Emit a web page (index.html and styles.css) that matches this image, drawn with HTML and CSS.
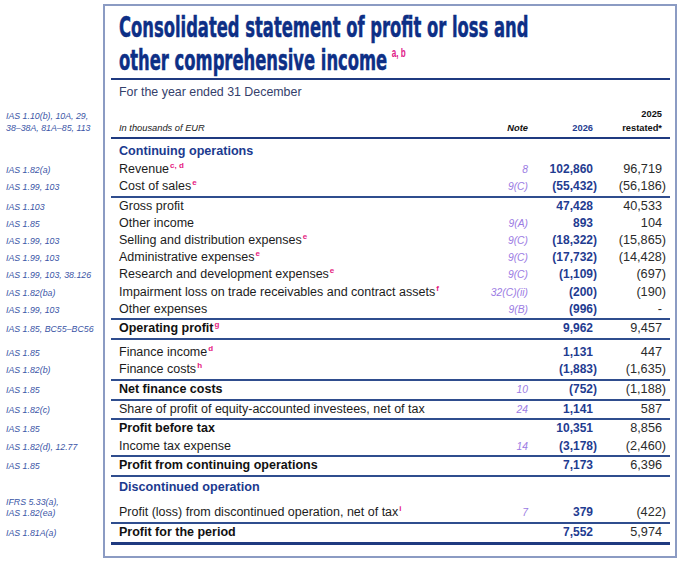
FILE: index.html
```html
<!DOCTYPE html>
<html lang="en">
<head>
<meta charset="utf-8">
<title>Consolidated statement of profit or loss and other comprehensive income</title>
<link rel="stylesheet" href="styles.css">
</head>
<body>
<main class="page">
  <header class="row top">
    <div class="ref"></div>
    <div class="body">
      <div class="inner">
        <div class="title-block">
          <h1 class="title"><span class="tl">Consolidated statement of profit or loss and</span><span class="tl">other comprehensive income<sup class="tfn">a, b</sup></span></h1>
        </div>
        <p class="period">For the year ended 31 December</p>
      </div>
    </div>
  </header>

  <div class="row head">
    <div class="ref">IAS 1.10(b), 10A, 29,<br>38–38A, 81A–85, 113</div>
    <div class="body"><div class="cells hd">
      <span class="lbl">In thousands of EUR</span>
      <span class="note">Note</span>
      <span class="cur p">2026</span>
      <span class="pri p">2025<br>restated*</span>
    </div></div>
  </div>

  <div class="row">
    <div class="ref"></div>
    <div class="body"><div class="cells sec first">
      <span class="lbl">Continuing operations</span>
      <span class="note"></span><span class="cur"></span><span class="pri"></span>
    </div></div>
  </div>

  <div class="row">
    <div class="ref">IAS 1.82(a)</div>
    <div class="body"><div class="cells">
      <span class="lbl">Revenue<sup class="fn">c, d</sup></span>
      <span class="note">8</span>
      <span class="cur p">102,860</span>
      <span class="pri p">96,719</span>
    </div></div>
  </div>

  <div class="row">
    <div class="ref">IAS 1.99, 103</div>
    <div class="body"><div class="cells rule">
      <span class="lbl">Cost of sales<sup class="fn">e</sup></span>
      <span class="note">9(C)</span>
      <span class="cur">(55,432)</span>
      <span class="pri">(56,186)</span>
    </div></div>
  </div>

  <div class="row">
    <div class="ref">IAS 1.103</div>
    <div class="body"><div class="cells">
      <span class="lbl">Gross profit</span>
      <span class="note"></span>
      <span class="cur p">47,428</span>
      <span class="pri p">40,533</span>
    </div></div>
  </div>

  <div class="row">
    <div class="ref">IAS 1.85</div>
    <div class="body"><div class="cells">
      <span class="lbl">Other income</span>
      <span class="note">9(A)</span>
      <span class="cur p">893</span>
      <span class="pri p">104</span>
    </div></div>
  </div>

  <div class="row">
    <div class="ref">IAS 1.99, 103</div>
    <div class="body"><div class="cells">
      <span class="lbl">Selling and distribution expenses<sup class="fn">e</sup></span>
      <span class="note">9(C)</span>
      <span class="cur">(18,322)</span>
      <span class="pri">(15,865)</span>
    </div></div>
  </div>

  <div class="row">
    <div class="ref">IAS 1.99, 103</div>
    <div class="body"><div class="cells">
      <span class="lbl">Administrative expenses<sup class="fn">e</sup></span>
      <span class="note">9(C)</span>
      <span class="cur">(17,732)</span>
      <span class="pri">(14,428)</span>
    </div></div>
  </div>

  <div class="row">
    <div class="ref">IAS 1.99, 103, 38.126</div>
    <div class="body"><div class="cells">
      <span class="lbl">Research and development expenses<sup class="fn">e</sup></span>
      <span class="note">9(C)</span>
      <span class="cur">(1,109)</span>
      <span class="pri">(697)</span>
    </div></div>
  </div>

  <div class="row">
    <div class="ref">IAS 1.82(ba)</div>
    <div class="body"><div class="cells">
      <span class="lbl">Impairment loss on trade receivables and contract assets<sup class="fn">f</sup></span>
      <span class="note">32(C)(ii)</span>
      <span class="cur">(200)</span>
      <span class="pri">(190)</span>
    </div></div>
  </div>

  <div class="row">
    <div class="ref">IAS 1.99, 103</div>
    <div class="body"><div class="cells rule">
      <span class="lbl">Other expenses</span>
      <span class="note">9(B)</span>
      <span class="cur">(996)</span>
      <span class="pri p">-</span>
    </div></div>
  </div>

  <div class="row">
    <div class="ref">IAS 1.85, BC55–BC56</div>
    <div class="body"><div class="cells rule tot">
      <span class="lbl">Operating profit<sup class="fn">g</sup></span>
      <span class="note"></span>
      <span class="cur p">9,962</span>
      <span class="pri p">9,457</span>
    </div></div>
  </div>

  <div class="row">
    <div class="ref">IAS 1.85</div>
    <div class="body"><div class="cells after-total">
      <span class="lbl">Finance income<sup class="fn">d</sup></span>
      <span class="note"></span>
      <span class="cur p">1,131</span>
      <span class="pri p">447</span>
    </div></div>
  </div>

  <div class="row">
    <div class="ref">IAS 1.82(b)</div>
    <div class="body"><div class="cells rule">
      <span class="lbl">Finance costs<sup class="fn">h</sup></span>
      <span class="note"></span>
      <span class="cur">(1,883)</span>
      <span class="pri">(1,635)</span>
    </div></div>
  </div>

  <div class="row">
    <div class="ref">IAS 1.85</div>
    <div class="body"><div class="cells rule tot">
      <span class="lbl">Net finance costs</span>
      <span class="note">10</span>
      <span class="cur">(752)</span>
      <span class="pri">(1,188)</span>
    </div></div>
  </div>

  <div class="row">
    <div class="ref">IAS 1.82(c)</div>
    <div class="body"><div class="cells rule">
      <span class="lbl">Share of profit of equity-accounted investees, net of tax</span>
      <span class="note">24</span>
      <span class="cur p">1,141</span>
      <span class="pri p">587</span>
    </div></div>
  </div>

  <div class="row">
    <div class="ref">IAS 1.85</div>
    <div class="body"><div class="cells tot">
      <span class="lbl">Profit before tax</span>
      <span class="note"></span>
      <span class="cur p">10,351</span>
      <span class="pri p">8,856</span>
    </div></div>
  </div>

  <div class="row">
    <div class="ref">IAS 1.82(d), 12.77</div>
    <div class="body"><div class="cells rule">
      <span class="lbl">Income tax expense</span>
      <span class="note">14</span>
      <span class="cur">(3,178)</span>
      <span class="pri">(2,460)</span>
    </div></div>
  </div>

  <div class="row">
    <div class="ref">IAS 1.85</div>
    <div class="body"><div class="cells rule tot">
      <span class="lbl">Profit from continuing operations</span>
      <span class="note"></span>
      <span class="cur p">7,173</span>
      <span class="pri p">6,396</span>
    </div></div>
  </div>

  <div class="row">
    <div class="ref"></div>
    <div class="body"><div class="cells sec sec-gap">
      <span class="lbl">Discontinued operation</span>
      <span class="note"></span><span class="cur"></span><span class="pri"></span>
    </div></div>
  </div>

  <div class="row two-line">
    <div class="ref">IFRS 5.33(a),<br>IAS 1.82(ea)</div>
    <div class="body"><div class="cells rule disc">
      <span class="lbl">Profit (loss) from discontinued operation, net of tax<sup class="fn">i</sup></span>
      <span class="note">7</span>
      <span class="cur p">379</span>
      <span class="pri">(422)</span>
    </div></div>
  </div>

  <div class="row">
    <div class="ref">IAS 1.81A(a)</div>
    <div class="body"><div class="cells rule-strong tot">
      <span class="lbl">Profit for the period</span>
      <span class="note"></span>
      <span class="cur p">7,552</span>
      <span class="pri p">5,974</span>
    </div></div>
  </div>

  <div class="row end">
    <div class="ref"></div>
    <div class="body"></div>
  </div>
</main>
</body>
</html>
```

FILE: styles.css
```css
* { box-sizing: border-box; }

html, body {
  margin: 0;
  padding: 0;
  background: #ffffff;
}

body {
  font-family: "Liberation Sans", Arial, sans-serif;
  color: #1c1c1c;
}

.page {
  width: 682px;
  padding-top: 4px;
}

.row {
  display: grid;
  grid-template-columns: 103px 574px;
  align-items: baseline;
}

.ref {
  padding-left: 6px;
  font-size: 8.8px;
  line-height: 11px;
  font-style: italic;
  color: #3a55a6;
  white-space: nowrap;
}

.body {
  border-left: 2px solid #8b9bc3;
  border-right: 2px solid #8b9bc3;
}

.top .body { border-top: 2px solid #8b9bc3; }

.end .body {
  border-bottom: 2px solid #8b9bc3;
  height: 13px;
}

.inner { margin: 0 5px 0 6px; }

.title-block {
  border-bottom: 2px solid #1f3a80;
  padding: 5px 0 1px 8px;
}

.title {
  margin: 0;
  font-family: "DejaVu Sans Condensed", "Liberation Sans Narrow", "DejaVu Sans", sans-serif;
  font-stretch: condensed;
  font-weight: 700;
  font-size: 28px;
  line-height: 33px;
  color: #0d2f86;
  -webkit-text-stroke: 0.5px #0d2f86;
  transform-origin: 0 0;
  transform: scaleX(0.65);
  white-space: nowrap;
}

.tl { display: block; }

.tfn {
  font-family: "Liberation Sans", Arial, sans-serif;
  font-size: 12.5px;
  font-weight: 700;
  color: #e0218a;
  -webkit-text-stroke: 0;
  vertical-align: 13px;
  line-height: 0;
  margin-left: 7px;
}

.period {
  margin: 0;
  padding: 4px 0 0 8px;
  font-size: 12.4px;
  line-height: 16px;
  color: #34406b;
}

.cells {
  display: grid;
  grid-template-columns: 1fr 60px 69px 69px;
  align-items: baseline;
  margin: 0 5px 0 6px;
  padding-left: 8px;
  padding-right: 4px;
  font-size: 12.5px;
  line-height: 17.2px;
}

.rule {
  border-bottom: 2px solid #2f4d8e;
  padding-bottom: 0.5px;
}

.rule-strong {
  border-bottom: 3px solid #1f3a80;
  padding-bottom: 0.5px;
}

.lbl { white-space: nowrap; }

.note {
  text-align: right;
  font-style: italic;
  font-size: 10.3px;
  color: #9b7be3;
}

.cur {
  text-align: right;
  font-weight: 700;
  font-size: 12px;
  color: #1f3c91;
}

.pri {
  text-align: right;
  font-size: 12.7px;
  color: #2b2b2b;
}

.p { padding-right: 4px; }

.fn {
  font-size: 8px;
  font-weight: 700;
  color: #e5197f;
  vertical-align: 5px;
  line-height: 0;
  margin-left: 1px;
}

/* header row */
.head { align-items: last baseline; }
.head .ref { line-height: 12px; }

.hd {
  align-items: last baseline;
  font-size: 9.3px;
  line-height: 14px;
  padding-top: 7px;
  padding-bottom: 2px;
  border-bottom: 2px solid #1f3a80;
}

.hd .lbl { font-style: italic; color: #222; }
.hd .note { font-weight: 700; font-size: 9.3px; color: #111; }
.hd .cur { font-size: 9.3px; }
.hd .pri { font-size: 9.3px; font-weight: 700; color: #111; }

/* row variants */
.sec .lbl {
  font-weight: 700;
  font-size: 12.6px;
  color: #1b3a8f;
}

.tot .lbl { font-weight: 700; color: #111; }

.first { padding-top: 4.4px; }
.after-total { padding-top: 4px; }
.sec-gap { padding-top: 2px; }
.disc { padding-top: 8px; }

.two-line { align-items: last baseline; }
.two-line .cells { align-items: last baseline; }
```
